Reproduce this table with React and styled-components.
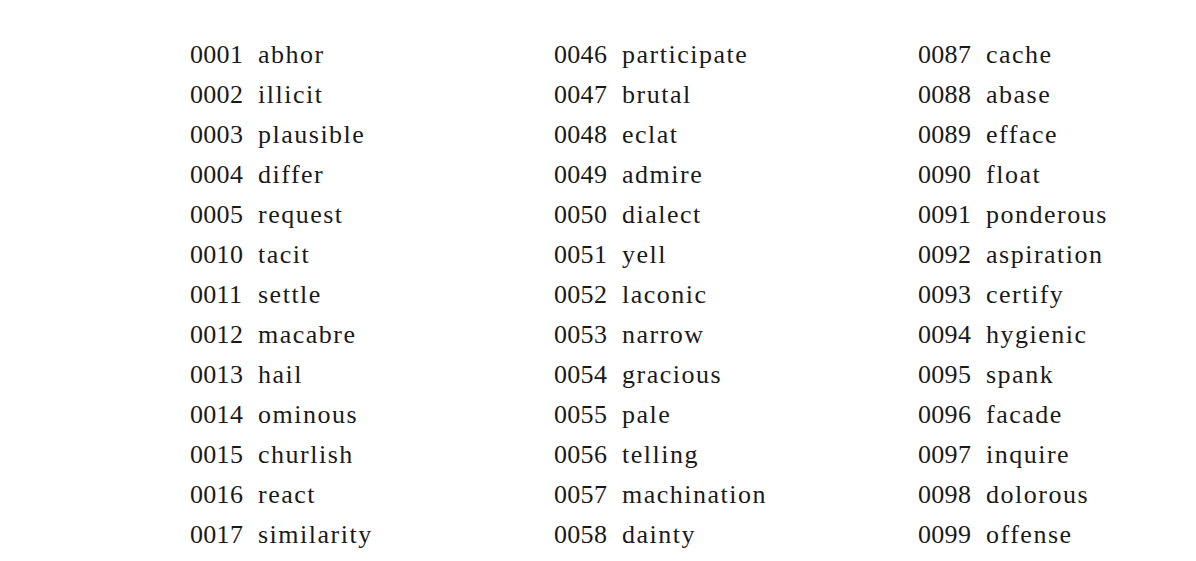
import React from "react";
import styled, { createGlobalStyle } from "styled-components";

const Global = createGlobalStyle`
  html, body { margin: 0; padding: 0; background: #ffffff; }
  body { font-family: "Liberation Serif", "Times New Roman", serif; color: #1a1a1a; }
`;

const Page = styled.div`
  width: 1196px;
  height: 561px;
  box-sizing: border-box;
  padding: 35px 0 0 190px;
  display: grid;
  grid-template-columns: repeat(3, 364px);
  overflow: hidden;
`;

const Column = styled.ul`
  list-style: none;
  margin: 0;
  padding: 0;
  display: flex;
  flex-direction: column;
`;

const Row = styled.li`
  display: flex;
  align-items: baseline;
  height: 40px;
  line-height: 40px;
  font-size: 26px;
  white-space: nowrap;
`;

const Num = styled.span`
  width: 53px;
  margin-right: 15px;
  letter-spacing: 0.3px;
`;

const Word = styled.span`
  letter-spacing: 1.5px;
`;

const columns = [
  [
    ["0001", "abhor"], ["0002", "illicit"], ["0003", "plausible"], ["0004", "differ"],
    ["0005", "request"], ["0010", "tacit"], ["0011", "settle"], ["0012", "macabre"],
    ["0013", "hail"], ["0014", "ominous"], ["0015", "churlish"], ["0016", "react"],
    ["0017", "similarity"],
  ],
  [
    ["0046", "participate"], ["0047", "brutal"], ["0048", "eclat"], ["0049", "admire"],
    ["0050", "dialect"], ["0051", "yell"], ["0052", "laconic"], ["0053", "narrow"],
    ["0054", "gracious"], ["0055", "pale"], ["0056", "telling"], ["0057", "machination"],
    ["0058", "dainty"],
  ],
  [
    ["0087", "cache"], ["0088", "abase"], ["0089", "efface"], ["0090", "float"],
    ["0091", "ponderous"], ["0092", "aspiration"], ["0093", "certify"], ["0094", "hygienic"],
    ["0095", "spank"], ["0096", "facade"], ["0097", "inquire"], ["0098", "dolorous"],
    ["0099", "offense"],
  ],
];

export default function App() {
  return (
    <>
      <Global />
      <Page>
        {columns.map((col, i) => (
          <Column key={i}>
            {col.map(([n, w]) => (
              <Row key={n}>
                <Num>{n}</Num>
                <Word>{w}</Word>
              </Row>
            ))}
          </Column>
        ))}
      </Page>
    </>
  );
}
